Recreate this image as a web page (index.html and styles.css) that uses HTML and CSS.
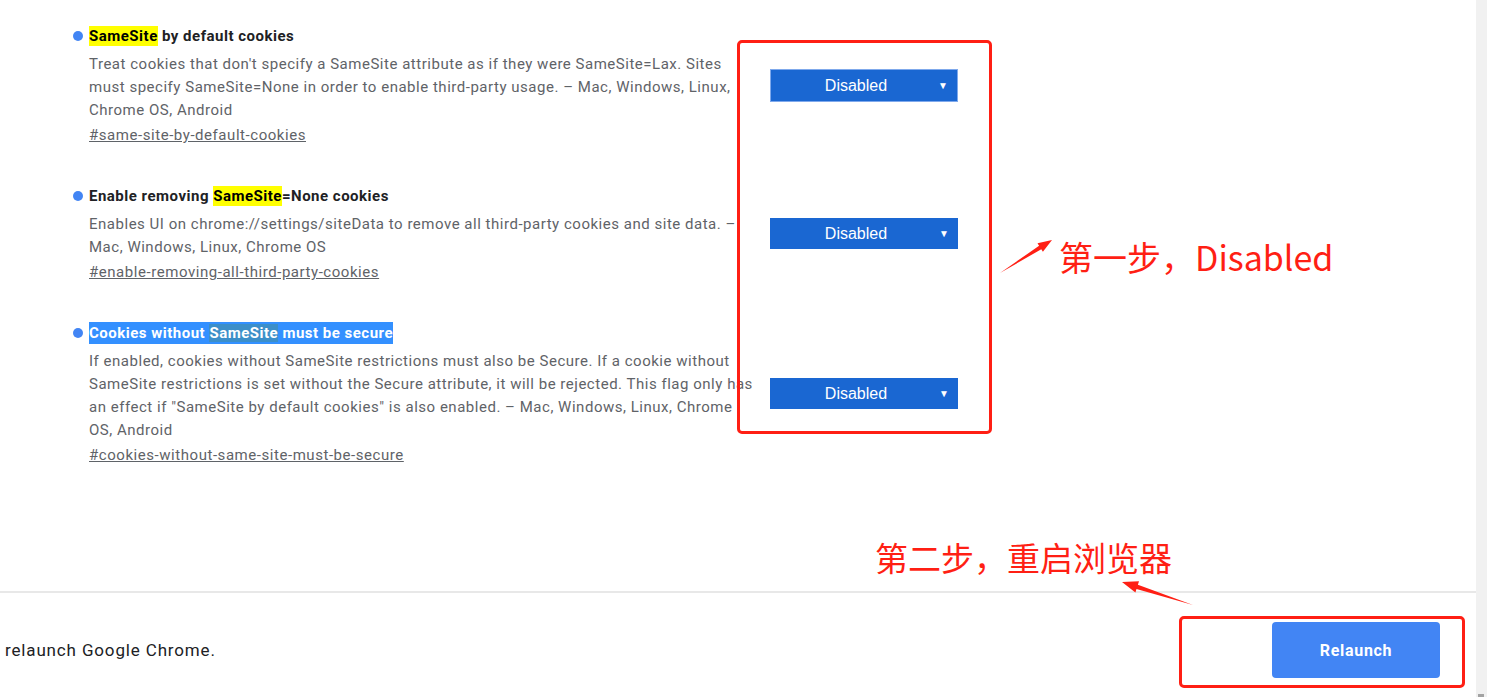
FILE: index.html
```html
<!DOCTYPE html>
<html lang="en">
<head>
    <meta charset="UTF-8">
    <meta name="viewport" content="width=device-width, initial-scale=1.0">
    <title>Experiments</title>
    <link rel="stylesheet" href="styles.css">
</head>
<body>
    <div id="window">
        <div id="main">
            <div id="flags">
                <div class="flag">
                    <div class="flag-text">
                        <div class="flag-title"><span class="bullet"></span><mark class="hit">SameSite</mark> by default cookies</div>
                        <p class="flag-desc">Treat cookies that don't specify a SameSite attribute as if they were SameSite=Lax. Sites must specify SameSite=None in order to enable third-party usage. – Mac, Windows, Linux, Chrome OS, Android</p>
                        <a class="flag-link" href="#same-site-by-default-cookies">#same-site-by-default-cookies</a>
                    </div>
                    <div class="select focused">Disabled<span class="caret">▼</span></div>
                </div>
                <div class="flag">
                    <div class="flag-text">
                        <div class="flag-title"><span class="bullet"></span>Enable removing <mark class="hit">SameSite</mark>=None cookies</div>
                        <p class="flag-desc">Enables UI on chrome://settings/siteData to remove all third-party cookies and site data. – Mac, Windows, Linux, Chrome OS</p>
                        <a class="flag-link" href="#enable-removing-all-third-party-cookies">#enable-removing-all-third-party-cookies</a>
                    </div>
                    <div class="select">Disabled<span class="caret">▼</span></div>
                </div>
                <div class="flag">
                    <div class="flag-text">
                        <div class="flag-title"><span class="bullet"></span><span class="selected">Cookies without <span class="selected-hit">SameSite</span> must be secure</span></div>
                        <p class="flag-desc">If enabled, cookies without SameSite restrictions must also be Secure. If a cookie without SameSite restrictions is set without the Secure attribute, it will be rejected. This flag only has an effect if "SameSite by default cookies" is also enabled. – Mac, Windows, Linux, Chrome OS, Android</p>
                        <a class="flag-link" href="#cookies-without-same-site-must-be-secure">#cookies-without-same-site-must-be-secure</a>
                    </div>
                    <div class="select">Disabled<span class="caret">▼</span></div>
                </div>
            </div>
            <div id="footer">
                <div class="footer-text">relaunch Google Chrome.</div>
                <button class="relaunch">Relaunch</button>
            </div>
        </div>
        <div id="scrollbar"><span class="scroll-arrow"></span></div>

        <!-- annotations drawn over the page -->
        <div class="mark-box box-selects"></div>
        <div class="mark-box box-relaunch"></div>
        <div class="note note-one">第一步，Disabled</div>
        <div class="note note-two">第二步，重启浏览器</div>
        <svg class="arrow arrow-one" width="60" height="40" viewBox="0 0 60 40">
            <path d="M1 34 L40.1 6.8 L38.5 4.3 L53 1 L43.9 12.7 L42.3 10.2 Z" fill="#ff1f14"/>
        </svg>
        <svg class="arrow arrow-two" width="80" height="30" viewBox="0 0 80 30">
            <path d="M73 26 L16.5 10 L15.4 13.6 L2 3 L19 2.2 L17.9 5.8 Z" fill="#ff1f14"/>
        </svg>
    </div>
</body>
</html>
```

FILE: styles.css
```css
body{
    margin:0; padding:0;
    background:#fff;
    font-family: Roboto, "Liberation Sans", Arial, sans-serif;
}
#window{
    position: relative;
    display: flex;
    flex-direction: row;
    width:1487px;
    height:697px;
    overflow: hidden;
}
#main{
    flex:1;
    display: flex;
    flex-direction: column;
}
#scrollbar{
    width:11px;
    background:#f1f1f1;
    position: relative;
}
.scroll-arrow{
    position: absolute;
    left:2px; bottom:0;
    width:6px; height:3px;
    background:#a3a3a3;
}

/* flag list */
#flags{
    flex:1;
    padding:26px 0 0 72px;
}
.flag{
    display: grid;
    grid-template-columns: 684px 188px;
    column-gap: 14px;
    align-items: center;
    margin-bottom: 39px;
}
.flag-title{
    position: relative;
    padding-left:17px;
    font-size:15px;
    font-weight:700;
    line-height:20px;
    letter-spacing:.5px;
    color:#202124;
}
.bullet{
    position: absolute;
    left:1px; top:5px;
    width:10px; height:10px;
    border-radius:50%;
    background:#4285f4;
}
.hit{
    background:#ffff00;
    color:#000;
    padding:1px 0;
}
.selected{
    background:#3390ff;
    color:#fff;
    padding:2px 0;
}
.selected-hit{
    background:#3c8fc9;
}
.flag-desc{
    margin:7px 0 0 17px;
    font-size:15px;
    line-height:23px;
    letter-spacing:.52px;
    color:#5f6368;
}
.flag-link{
    display: inline-block;
    margin:2px 0 0 17px;
    font-size:15px;
    line-height:23px;
    letter-spacing:.55px;
    color:#5f6368;
    text-decoration: underline;
}
.select{
    position: relative;
    height:31px;
    margin-bottom:3px;
    box-sizing: border-box;
    background:#1a67d2;
    color:#fff;
    font-family: "Liberation Sans", Arial, sans-serif;
    font-size:16px;
    line-height:31px;
    text-align: center;
    padding-right:16px;
}
.select.focused{
    height:33px;
    line-height:31px;
    border:1px solid #7fa9ec;
}
.caret{
    position: absolute;
    right:9px; top:0;
    font-size:10px;
}

/* bottom bar */
#footer{
    height:106px;
    border-top:2px solid #e8e8e8;
    display: flex;
    flex-direction: row;
    justify-content: space-between;
    align-items: center;
    padding:10px 36px 0 5px;
    box-sizing: border-box;
}
.footer-text{
    font-size:17px;
    letter-spacing:.85px;
    color:#202124;
}
.relaunch{
    width:168px; height:56px;
    border:none;
    border-radius:4px;
    background:#4285f4;
    color:#fff;
    font-family: Roboto, "Liberation Sans", Arial, sans-serif;
    font-size:16px;
    font-weight:700;
    letter-spacing:.7px;
}

/* red annotations */
.mark-box{
    position: absolute;
    border:3px solid #ff1f14;
    border-radius:5px;
    box-sizing: border-box;
}
.box-selects{
    left:737px; top:40px;
    width:255px; height:394px;
}
.box-relaunch{
    left:1179px; top:616px;
    width:286px; height:72px;
}
.note{
    position: absolute;
    color:#ff1f14;
    font-family: "Noto Sans CJK SC", "Noto Sans", sans-serif;
    white-space: nowrap;
}
.note-one{
    left:1059px; top:234px;
    font-size:34px;
    line-height:46px;
}
.note-two{
    left:875px; top:535px;
    font-size:33px;
    line-height:44px;
}
.arrow{
    position: absolute;
}
.arrow-one{
    left:999px; top:239px;
}
.arrow-two{
    left:1120px; top:579px;
}
```
